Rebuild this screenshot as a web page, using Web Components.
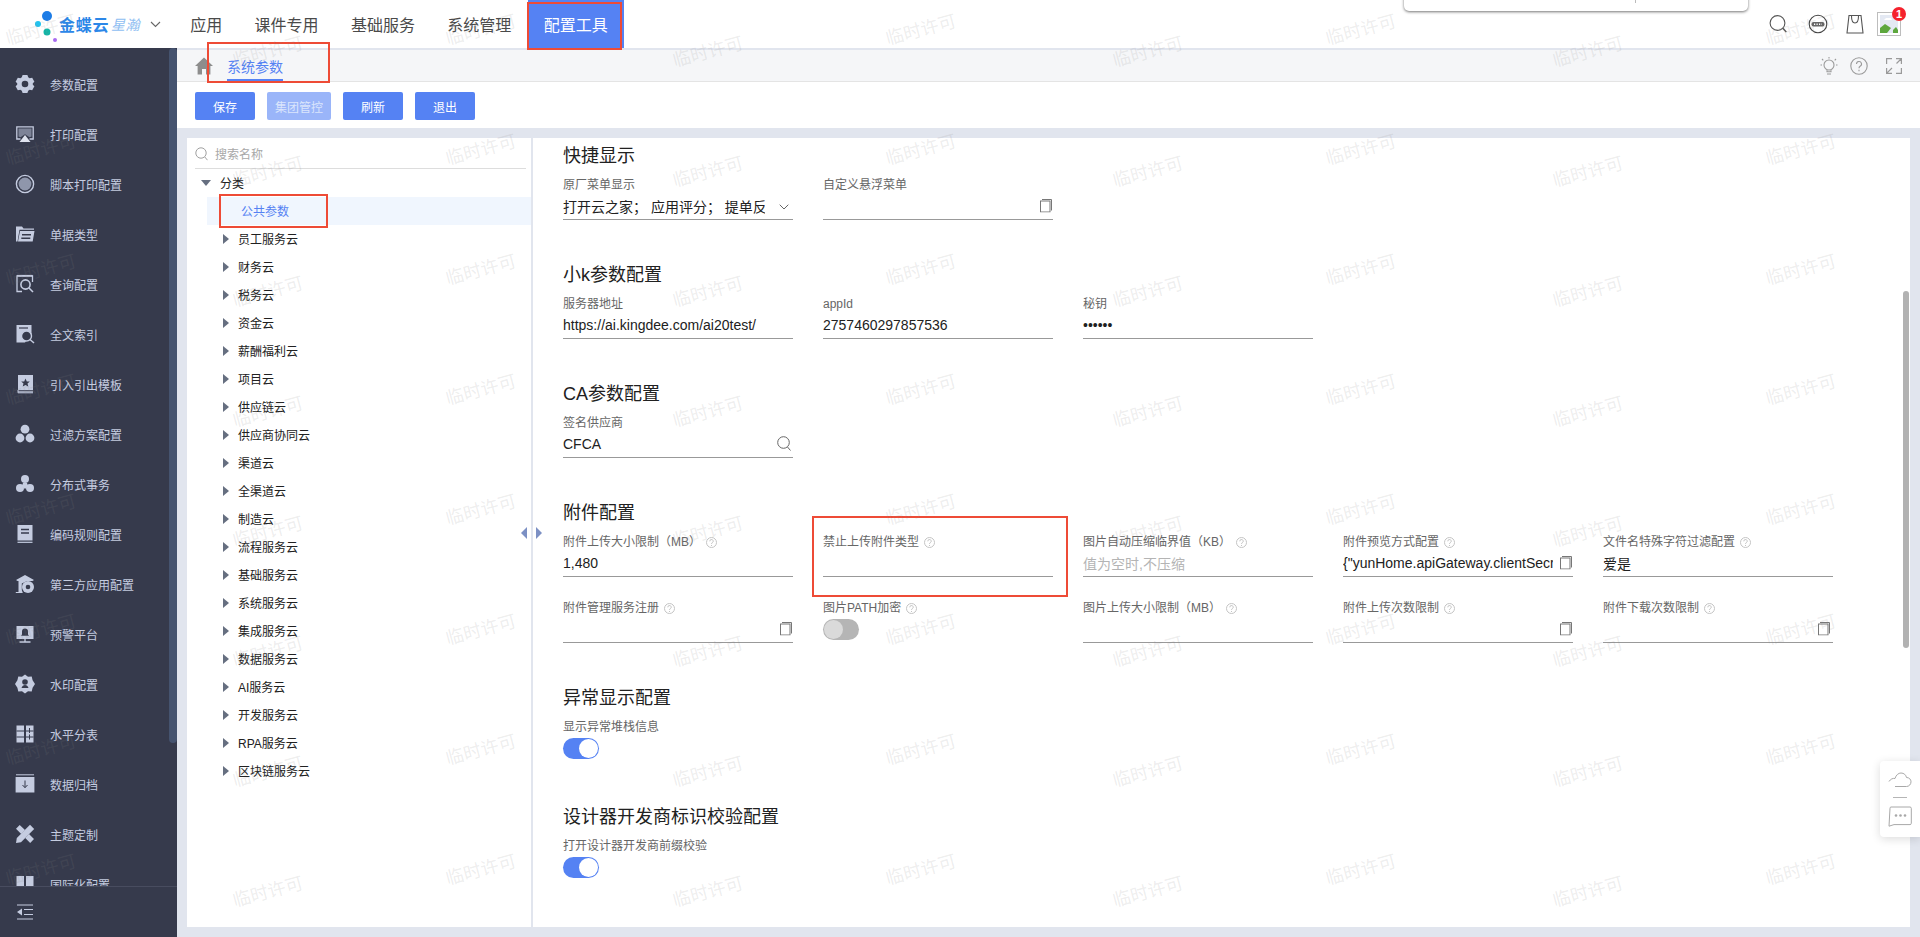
<!DOCTYPE html>
<html lang="zh-CN">
<head>
<meta charset="utf-8">
<title>系统参数</title>
<style>
html,body{margin:0;padding:0;width:1920px;height:937px;overflow:hidden;background:#fff;font-family:"Liberation Sans","Noto Sans CJK SC",sans-serif;font-size:12px;color:#212121}
svg{display:block}
</style>
</head>
<body>
<kd-app>
  <kd-header slot="header">
    <kd-nav>应用</kd-nav><kd-nav>课件专用</kd-nav><kd-nav>基础服务</kd-nav><kd-nav>系统管理</kd-nav><kd-nav active>配置工具</kd-nav>
  </kd-header>
  <kd-sidebar slot="side">
    <kd-side label="参数配置"><svg width="20" height="20" viewBox="0 0 20 20" fill="#c5cce0"><path fill-rule="evenodd" d="M7.6 1h4.8l.8 2.3 1.5.9 2.5-.5 2.2 4-1.6 1.6v1.4l1.6 1.6-2.2 4-2.5-.5-1.5.9-.8 2.3H7.6l-.8-2.3-1.5-.9-2.5.5-2.2-4 1.6-1.6V9.300L.6 7.700l2.200-4 2.500.5 1.500-.9zM10 6.700a3.300 3.300 0 1 0 0 6.600 3.300 3.300 0 0 0 0-6.600z"/></svg></kd-side>
    <kd-side label="打印配置"><svg width="20" height="20" viewBox="0 0 20 20"><path d="M5.500 15H1.800V2.800h16.400V15h-3.700" fill="none" stroke="#c5cce0" stroke-width="1.300"/><path d="M3.500 4.500h13v8l-2 .8-4.500-3-4.500 3-2-.8z" fill="#7d8397"/><path d="M10 11l5.500 7h-11z" fill="#dfe3ee"/></svg></kd-side>
    <kd-side label="脚本打印配置"><svg width="20" height="20" viewBox="0 0 20 20"><circle cx="10" cy="10" r="8.600" fill="none" stroke="#c5cce0" stroke-width="1.400"/><circle cx="10" cy="10" r="6.400" fill="#8f96ab"/></svg></kd-side>
    <kd-side label="单据类型"><svg width="20" height="20" viewBox="0 0 20 20" fill="#c5cce0"><path d="M1 2.500h6l1.500 2H19v1.200H4.500L2.500 17.500H1z"/><path fill-rule="evenodd" d="M5 7h14.500l-1.800 10.500H3zM7 10v1.400h9V10zm-.7 3.600V15h9v-1.400z"/></svg></kd-side>
    <kd-side label="查询配置"><svg width="20" height="20" viewBox="0 0 20 20" fill="none" stroke="#c5cce0" stroke-width="1.300"><path d="M7 17.500H2V1.800h15.500V8"/><path d="M2 1.800h15.500" stroke-width="1.800"/><circle cx="10.500" cy="10.500" r="4.600" stroke-width="1.600"/><path d="M14 14l4 4" stroke-width="1.600"/></svg></kd-side>
    <kd-side label="全文索引"><svg width="20" height="20" viewBox="0 0 20 20"><path d="M1.500 1h15v8.500L10 18.500H1.500z" fill="#c5cce0"/><path d="M4 4h9" stroke="#363a4c" stroke-width="1.200"/><circle cx="11.500" cy="12" r="5" fill="#363a4c" stroke="#c5cce0" stroke-width="1.400"/><path d="M15 15.500l4 3.500" stroke="#c5cce0" stroke-width="1.500"/></svg></kd-side>
    <kd-side label="引入引出模板"><svg width="20" height="20" viewBox="0 0 20 20"><path d="M3 1h15v15.200H3z" fill="#c5cce0"/><path d="M3 17.800h15M3 16v2.800h15" fill="none" stroke="#c5cce0" stroke-width="1"/><path d="M10.500 4.500l1.300 2.900 3 .2-2.300 2 .8 3-2.800-1.600-2.800 1.600.8-3-2.300-2 3-.2z" fill="#363a4c"/></svg></kd-side>
    <kd-side label="过滤方案配置"><svg width="20" height="20" viewBox="0 0 20 20" fill="#c5cce0"><circle cx="10" cy="5.200" r="4.400"/><circle cx="5" cy="14" r="4.400"/><circle cx="15" cy="14" r="4.400"/></svg></kd-side>
    <kd-side label="分布式事务"><svg width="20" height="20" viewBox="0 0 20 20" fill="#c5cce0"><circle cx="10" cy="5" r="4"/><circle cx="5" cy="14" r="4"/><circle cx="15" cy="14" r="4"/><path d="M8 9h4l1 3-3 3-3-3z"/></svg></kd-side>
    <kd-side label="编码规则配置"><svg width="20" height="20" viewBox="0 0 20 20"><path d="M2.500 1h15v15.500h-15z" fill="#c5cce0"/><path d="M2.500 18.300h15" stroke="#c5cce0" stroke-width="1.200"/><path d="M6 5.500h8M6 9h8" stroke="#363a4c" stroke-width="1.300"/></svg></kd-side>
    <kd-side label="第三方应用配置"><svg width="20" height="20" viewBox="0 0 20 20"><path d="M10 1L1 6l1.500 1h1v11H.8v1h7l-1-3V9.500L12 7h5.500L19 6z" fill="#c5cce0"/><circle cx="13" cy="13" r="6" fill="#c5cce0"/><circle cx="13" cy="13" r="2.300" fill="#363a4c"/></svg></kd-side>
    <kd-side label="预警平台"><svg width="20" height="20" viewBox="0 0 20 20"><path d="M1.500 2h17v13h-17z" fill="#c5cce0"/><path d="M10 18h-5.500M15.500 18H10v-3" stroke="#c5cce0" stroke-width="1.300" fill="none"/><path d="M10 4.500a3 3 0 0 1 3 3v3l1 1.300H6l1-1.300v-3a3 3 0 0 1 3-3z" fill="#363a4c"/></svg></kd-side>
    <kd-side label="水印配置"><svg width="20" height="20" viewBox="0 0 20 20"><path d="M10 .5l3 2.300 3.700-.2.900 3.700L20 10l-2.400 3.700-.9 3.700-3.700-.2-3 2.300-3-2.300-3.700.2-.9-3.700L0 10l2.400-3.700.9-3.700 3.700.2z" fill="#c5cce0"/><circle cx="10" cy="8" r="2.800" fill="#363a4c"/><path d="M6.500 14c.5-2 2-3 3.500-3s3 1 3.500 3z" fill="#363a4c"/></svg></kd-side>
    <kd-side label="水平分表"><svg width="20" height="20" viewBox="0 0 20 20"><path d="M1.500 1.500h7.500v17H1.500zM11 1.500h7.500v17H11z" fill="#c5cce0"/><path d="M1.500 7h7.500M1.500 13h7.500M11 7h7.500M11 13h7.500" stroke="#363a4c" stroke-width="1.100"/><path d="M14.500 4v5M14.500 10.500v5" stroke="#363a4c" stroke-width="1"/></svg></kd-side>
    <kd-side label="数据归档"><svg width="20" height="20" viewBox="0 0 20 20"><path d="M1 .8h18" stroke="#c5cce0" stroke-width="1"/><path d="M.6 3h18.800v15.500H.6z" fill="#c5cce0"/><path d="M10 6.500v7M7.500 11l2.500 2.700 2.500-2.700" fill="none" stroke="#363a4c" stroke-width="1"/></svg></kd-side>
    <kd-side label="主题定制"><svg width="20" height="20" viewBox="0 0 20 20" fill="#c5cce0"><path d="M15 .8L19.200 5 6 18.200 1 19l.8-5z"/><path d="M4.700 1L1 4.700l5.200 5.200L10 6zM14 10l-3.800 3.900 5 5L19 15z"/></svg></kd-side>
    <kd-side label="国际化配置"><svg width="20" height="20" viewBox="0 0 20 20" fill="#c5cce0"><path d="M1.500 2h7.500v16H1.500zM11 2h7.500v16H11z"/></svg></kd-side>
  </kd-sidebar>
  <kd-breadcrumb slot="crumb">系统参数</kd-breadcrumb>
  <kd-toolbar slot="toolbar">
    <kd-button>保存</kd-button><kd-button disabled>集团管控</kd-button><kd-button>刷新</kd-button><kd-button>退出</kd-button>
  </kd-toolbar>
  <kd-panel slot="content">
    <kd-tree slot="tree">
      <kd-row root>分类</kd-row>
      <kd-row leaf selected>公共参数</kd-row>
      <kd-row>员工服务云</kd-row><kd-row>财务云</kd-row><kd-row>税务云</kd-row><kd-row>资金云</kd-row><kd-row>薪酬福利云</kd-row><kd-row>项目云</kd-row><kd-row>供应链云</kd-row><kd-row>供应商协同云</kd-row><kd-row>渠道云</kd-row><kd-row>全渠道云</kd-row><kd-row>制造云</kd-row><kd-row>流程服务云</kd-row><kd-row>基础服务云</kd-row><kd-row>系统服务云</kd-row><kd-row>集成服务云</kd-row><kd-row>数据服务云</kd-row><kd-row>AI服务云</kd-row><kd-row>开发服务云</kd-row><kd-row>RPA服务云</kd-row><kd-row>区块链服务云</kd-row>
    </kd-tree>
    <kd-section title="快捷显示">
      <kd-field label="原厂菜单显示" value="打开云之家； 应用评分； 提单反馈； 帮助中心" icon="chevron"></kd-field>
      <kd-field label="自定义悬浮菜单" icon="copy"></kd-field>
    </kd-section>
    <kd-section title="小k参数配置">
      <kd-field label="服务器地址" value="https://ai.kingdee.com/ai20test/"></kd-field>
      <kd-field label="appId" value="2757460297857536"></kd-field>
      <kd-field label="秘钥" value="••••••"></kd-field>
    </kd-section>
    <kd-section title="CA参数配置">
      <kd-field label="签名供应商" value="CFCA" icon="search"></kd-field>
    </kd-section>
    <kd-section title="附件配置">
      <kd-field label="附件上传大小限制（MB）" help value="1,480"></kd-field>
      <kd-field label="禁止上传附件类型" help></kd-field>
      <kd-field label="图片自动压缩临界值（KB）" help placeholder="值为空时,不压缩"></kd-field>
      <kd-field label="附件预览方式配置" help value='{"yunHome.apiGateway.clientSecret":"kingdee"}' icon="copy"></kd-field>
      <kd-field label="文件名特殊字符过滤配置" help value="爱是"></kd-field>
      <kd-field label="附件管理服务注册" help icon="copy"></kd-field>
      <kd-field label="图片PATH加密" help toggle="off"></kd-field>
      <kd-field label="图片上传大小限制（MB）" help></kd-field>
      <kd-field label="附件上传次数限制" help icon="copy"></kd-field>
      <kd-field label="附件下载次数限制" help icon="copy" inset></kd-field>
    </kd-section>
    <kd-section title="异常显示配置">
      <kd-field label="显示异常堆栈信息" toggle="on"></kd-field>
    </kd-section>
    <kd-section title="设计器开发商标识校验配置">
      <kd-field label="打开设计器开发商前缀校验" toggle="on"></kd-field>
    </kd-section>
  </kd-panel>
  <kd-popup slot="over"></kd-popup>
  <kd-float slot="over"></kd-float>
  <kd-annot slot="over" box="527,2,95,48"></kd-annot>
  <kd-annot slot="over" box="207,42,123,41"></kd-annot>
  <kd-annot slot="over" box="219,194,109,34"></kd-annot>
  <kd-annot slot="over" box="812,516,256,81"></kd-annot>
  <kd-watermark slot="over"></kd-watermark>
</kd-app>
<script>
const mount=(el,html)=>{el.attachShadow({mode:'open'}).innerHTML=html};
const def=(n,f)=>customElements.define(n,class extends HTMLElement{constructor(){super();}connectedCallback(){if(!this.shadowRoot)f(this);}});

def('kd-app',el=>mount(el,`<style>
:host{display:flex;flex-direction:column;width:1920px;height:937px;position:relative;overflow:hidden}
.body{flex:1;display:flex;min-height:0}
.main{flex:1;display:flex;flex-direction:column;min-width:0}
.over{position:absolute;inset:0;pointer-events:none}
</style>
<slot name="header"></slot>
<div class="body"><slot name="side"></slot>
<div class="main"><slot name="crumb"></slot><slot name="toolbar"></slot><slot name="content"></slot></div></div>
<div class="over"><slot name="over"></slot></div>`));

def('kd-header',el=>mount(el,`<style>
:host{display:flex;align-items:stretch;height:48px;background:#fff;flex:none}
.logo{width:174px;flex:none;display:flex;align-items:center;position:relative}
.dots{margin-left:30px;flex:none}
.b{font:bold 16px "Liberation Sans","Noto Sans CJK SC",sans-serif;color:#2b87e8;letter-spacing:.7px;white-space:nowrap}
.x{font:italic 14px "Liberation Sans","Noto Sans CJK SC",sans-serif;color:#8fbef2;margin-left:2px;letter-spacing:.5px;white-space:nowrap}
.chev{margin-left:10px;flex:none}
nav{display:flex;align-items:stretch}
.tools{margin-left:auto;display:flex;align-items:center;padding-right:19px}
.pic{position:relative;width:24px;height:24px;box-sizing:border-box;border:1px solid #bdbdbd;margin-left:12px;background:#fff}
.badge{position:absolute;right:-6px;top:-6px;width:14px;height:14px;border-radius:50%;background:#f5222d;color:#fff;font:bold 11px/14px "Liberation Sans",sans-serif;text-align:center}
</style>
<div class="logo">
<svg class="dots" width="29" height="42" viewBox="0 0 29 42"><circle cx="17" cy="13" r="5" fill="#1c7ce6"/><circle cx="8" cy="21" r="3" fill="#22c3ee"/><circle cx="17" cy="29" r="3.500" fill="#12b7a8"/><circle cx="25" cy="37" r="2" fill="#a86bf0"/></svg>
<span class="b">金蝶云</span><span class="x">星瀚</span>
<svg class="chev" width="11" height="7" viewBox="0 0 11 7"><path d="M1 1l4.500 4.500L10 1" fill="none" stroke="#666" stroke-width="1.100"/></svg>
</div>
<nav><slot></slot></nav>
<div class="tools">
<svg width="20" height="20" viewBox="0 0 20 20" fill="none" stroke="#555" stroke-width="1.100"><circle cx="9.500" cy="9" r="7.400"/><path d="M14.800 14.300l3.500 3.700" stroke-width="1.400"/></svg>
<svg style="margin-left:20px" width="20" height="20" viewBox="0 0 20 20" fill="none" stroke="#444"><circle cx="10" cy="10" r="8.800" stroke-width="1.100"/><rect x="3.500" y="8" width="13" height="4.400" rx="2" fill="#666" stroke="none"/><path d="M6 10.200h8" stroke="#fff" stroke-dasharray="1.200 1.300" stroke-width="1.500"/></svg>
<svg style="margin-left:17px" width="20" height="20" viewBox="0 0 20 20" fill="none" stroke="#555" stroke-width="1.100"><path d="M4 1.500h12l2 17.500H2z"/><path d="M6.500 2c0 5 1.500 7 3.500 7s3.500-2 3.500-7"/></svg>
<div class="pic"><svg width="22" height="22" viewBox="0 0 22 22"><path d="M2 2h18v18H2z" fill="#e4e9f3"/><path d="M2 15l5-4 6 4-4 5H2z" fill="#5da73d"/><path d="M15 17l3-3 2 3v3h-5z" fill="#5da73d"/><path d="M8 5h5l1 2H6z" fill="#fff"/></svg><span class="badge">1</span></div>
</div>`));

def('kd-nav',el=>{const a=el.hasAttribute('active');mount(el,`<style>
:host{display:flex;align-items:center;padding:0 16.200px;font-size:16px;color:${a?'#fff':'#4a4a4a'};background:${a?'#5582f3':'transparent'};white-space:nowrap}
</style><slot></slot>`)});

def('kd-sidebar',el=>mount(el,`<style>
:host{display:flex;flex-direction:column;width:177px;flex:none;background:#363a4c;position:relative}
.list{flex:1;min-height:0;overflow:hidden;padding:11px 0 0;box-sizing:border-box;width:168px}
.thumb{position:absolute;left:169px;top:0;width:8px;height:695px;background:#45536f;border-radius:4px}
.foot{height:51px;flex:none;box-sizing:border-box;border-top:1px solid #484c5f;display:flex;align-items:center;padding-left:17px;position:relative;background:#363a4c}
</style>
<div class="list"><slot></slot></div><div class="thumb"></div>
<div class="foot"><svg width="16" height="16" viewBox="0 0 16 16"><path d="M0 1h16M7 5.500h9M7 10.500h9M0 15h16" stroke="#c5cce0" stroke-width="1.200"/><path d="M5 4.500v7L0 8z" fill="#c5cce0"/></svg></div>`));

def('kd-side',el=>mount(el,`<style>
:host{display:flex;align-items:center;height:50px;padding-left:15px;color:#c5cce0;font-size:12px;white-space:nowrap}
span{margin-left:15px}
</style><slot></slot><span>${el.getAttribute('label')}</span>`));

def('kd-breadcrumb',el=>mount(el,`<style>
:host{display:flex;flex:none;box-sizing:border-box;height:34px;background:#f5f6f8;border-top:2px solid #e1e5ee;border-bottom:1px solid #e4e4e4;padding-left:18px;align-items:stretch}
.home{align-self:center;margin-top:1px}
.tab{margin-left:14px;font-size:14px;color:#5582f3;line-height:34px;border-bottom:2px solid #5582f3;height:29px;white-space:nowrap}
.r{margin-left:auto;display:flex;align-items:center;padding-right:18px}
</style>
<svg class="home" width="18" height="18" viewBox="0 0 18 18"><path d="M9 .5L18 9h-2.600v8.500H11V12H7v5.500H2.600V9H0z" fill="#8d8d8d"/></svg>
<div class="tab"><slot></slot></div>
<div class="r">
<svg width="20" height="20" viewBox="0 0 20 20" fill="none" stroke="#9a9a9a" stroke-width="1.100"><circle cx="10" cy="9" r="5"/><path d="M8 14.300v1.500h4v-1.500M8 18h4M10 1v1.500M3 3l1.300 1.300M17 3l-1.300 1.300M1.500 9H3M17 9h1.500"/></svg>
<svg style="margin-left:11px" width="18" height="18" viewBox="0 0 18 18" fill="none" stroke="#9a9a9a" stroke-width="1.100"><circle cx="9" cy="9" r="8.200"/><path d="M6.500 7a2.500 2.500 0 1 1 3.600 2.200c-.8.500-1.100 1-1.100 2"/><path d="M9 12.800v1.400"/></svg>
<svg style="margin-left:18px" width="16" height="16" viewBox="0 0 16 16" fill="none" stroke="#9a9a9a" stroke-width="1.200"><path d="M6 .6H.6V6M10 .6h5.400V6M.6 10v5.400H6M15.400 10v5.400H10M.8 15.200L6 10M15 1l-4.500 4.500"/></svg>
</div>`));

def('kd-toolbar',el=>mount(el,`<style>:host{display:flex;flex:none;height:46px;background:#fff;padding:10px 0 0 18px;box-sizing:border-box;gap:12px}</style><slot></slot>`));

def('kd-button',el=>{const d=el.hasAttribute('disabled');mount(el,`<style>
:host{display:flex;align-items:center;justify-content:center;height:28px;min-width:60px;padding:0 8px;box-sizing:border-box;border-radius:2px;background:${d?'#9ab5f9':'#5582f3'};color:${d?'#dbe5fc':'#fff'};font-size:12px;white-space:nowrap}
</style><slot></slot>`)});

def('kd-panel',el=>mount(el,`<style>
:host{display:block;flex:1;min-height:0;background:#e1e5ee;padding:10px;box-sizing:border-box}
.box{position:relative;display:flex;height:100%;background:#fff;overflow:hidden}
.form{flex:1;min-width:0;padding:6px 0 0 30px;overflow:hidden}
.grip{position:absolute;left:334px;top:389px;display:flex;gap:9px}
.bar{position:absolute;right:1px;top:153px;width:6px;height:357px;background:#b2b2b2;border-radius:3px}
</style>
<div class="box"><slot name="tree"></slot>
<div class="grip">
<svg width="6" height="12" viewBox="0 0 6 12"><path d="M6 0v12L0 6z" fill="#7c90c4"/></svg>
<svg width="6" height="12" viewBox="0 0 6 12"><path d="M0 0v12l6-6z" fill="#7c90c4"/></svg>
</div>
<div class="form"><slot></slot></div><div class="bar"></div></div>`));

def('kd-tree',el=>mount(el,`<style>
:host{display:block;width:346px;flex:none;box-sizing:border-box;border-right:2px solid #e1e5ee}
.s{margin:0 5px 0 8px;height:31px;box-sizing:border-box;border-bottom:1px solid #ddd;display:flex;align-items:center;color:#a8a8a8;font-size:12px;gap:7px;padding-top:1px}
.rows{padding-left:20px}
</style>
<div class="s"><svg width="13" height="14" viewBox="0 0 13 14" fill="none" stroke="#a0a0a0" stroke-width="1"><circle cx="6" cy="6" r="5.200"/><path d="M9.800 10l2.700 3.200"/></svg><span>搜索名称</span></div>
<div class="rows"><slot></slot></div>`));

def('kd-row',el=>{const root=el.hasAttribute('root'),leaf=el.hasAttribute('leaf'),sel=el.hasAttribute('selected');
const arrow=root?`<svg style="margin-left:-6px" width="10" height="6" viewBox="0 0 10 6"><path d="M0 0h10L5 6z" fill="#666f80"/></svg>`:leaf?'':`<svg style="margin-left:16px" width="6" height="10" viewBox="0 0 6 10"><path d="M0 0l6 5-6 5z" fill="#666f80"/></svg>`;
mount(el,`<style>
:host{display:flex;align-items:center;height:28px;font-size:12px;color:${sel?'#5582f3':'#212121'};background:${sel?'#f0f6fe':'transparent'};white-space:nowrap}
span{margin-left:${root?'9px':leaf?'34px':'9px'};position:relative;top:-1px}
</style>${arrow}<span><slot></slot></span>`)});

def('kd-section',el=>mount(el,`<style>
:host{display:block;margin-bottom:43px}
h2{margin:0 0 6px;font-weight:normal;font-size:18px;line-height:24px;height:24px;color:#212121;white-space:nowrap}
.g{display:grid;grid-template-columns:repeat(5,230px);column-gap:30px;row-gap:20px}
</style><h2>${el.getAttribute('title')}</h2><div class="g"><slot></slot></div>`));

const ICONS={
 copy:`<svg width="14" height="14" viewBox="0 0 14 14" fill="none" stroke="#777" stroke-width="1"><rect x="1.500" y="2.500" width="9.500" height="11"/><path d="M3 1h9.500v11"/></svg>`,
 search:`<svg width="14" height="15" viewBox="0 0 14 15" fill="none" stroke="#666" stroke-width="1"><circle cx="6.500" cy="6.500" r="5.800"/><path d="M10.500 11l3 3.500"/></svg>`,
 chevron:`<svg width="10" height="6" viewBox="0 0 10 6" fill="none" stroke="#666" stroke-width="1"><path d="M.7.700L5 5 9.300.7"/></svg>`};
def('kd-field',el=>{
 const g=n=>el.getAttribute(n);const icon=g('icon'),tog=g('toggle'),val=g('value'),ph=g('placeholder'),help=el.hasAttribute('help'),inset=el.hasAttribute('inset');
 const pr=icon==='chevron'?28:icon?20:0;
 const rt=icon==='chevron'?4:icon==='search'?2:inset?2:0;
 const helpSvg=help?`<svg class="h" width="11" height="11" viewBox="0 0 11 11" fill="none" stroke="#c4c4c4"><circle cx="5.500" cy="5.500" r="5"/><path d="M3.800 4.300a1.700 1.700 0 1 1 2.500 1.400c-.5.300-.8.600-.8 1.300M5.500 8v1"/></svg>`:'';
 const body=tog?`<kd-toggle ${tog==='on'?'on':''}></kd-toggle>`:
 `<div class="in"><div class="v ${ph?'ph':''}" style="margin-right:${pr}px">${(val||ph||'').replace(/"/g,'&quot;')}</div>${icon?`<div class="ic" style="right:${rt}px;${icon==='chevron'?'margin-top:-1px':''}">${ICONS[icon]}</div>`:''}</div>`;
 mount(el,`<style>
:host{display:block;height:46px;min-width:0}
.l{height:22px;margin-bottom:-2px;line-height:20px;font-size:12px;color:#666;display:flex;align-items:center;white-space:nowrap}
.h{margin-left:5px;flex:none}
.in{position:relative;height:26px;box-sizing:border-box;border-bottom:1px solid #999;display:flex;align-items:center}
.v{flex:1;min-width:0;overflow:hidden;white-space:pre;font-size:14px;color:#212121;position:relative;top:-1px}
.ph{color:#b4b4b4}
.ic{position:absolute;top:50%;transform:translateY(-50%)}
kd-toggle{margin-top:2px}
</style><div class="l"><span>${g('label')}</span>${helpSvg}</div>${body}`)});

def('kd-toggle',el=>{const on=el.hasAttribute('on');mount(el,`<style>
:host{display:flex;width:36px;height:21px;border-radius:10.500px;background:${on?'#5582f3':'#b5b5b5'};align-items:center;justify-content:${on?'flex-end':'flex-start'};padding:0 1px;box-sizing:border-box}
i{display:block;width:19px;height:19px;border-radius:50%;background:${on?'#fff':'#dadada'}}
</style><i></i>`)});

def('kd-popup',el=>mount(el,`<style>
:host{position:absolute;left:1404px;top:-10px;width:344px;height:21px;background:#fff;border-radius:0 0 5px 5px;box-shadow:0 1px 3px rgba(0,0,0,.55)}
i{position:absolute;left:231px;top:10px;width:1px;height:3px;background:#bbb}
</style><i></i>`));

def('kd-float',el=>mount(el,`<style>
:host{position:absolute;left:1880px;top:761px;width:40px;height:76px;background:#fff;border-radius:4px 0 0 4px;box-shadow:0 2px 10px rgba(0,0,0,.14);display:flex;flex-direction:column;align-items:center;padding-top:11px;box-sizing:border-box}
i{display:block;width:14px;height:1px;background:#b5b5b5;margin:9px 0 8px}
</style>
<svg width="24" height="16" viewBox="0 0 24 16" fill="none" stroke="#a8a8a8" stroke-width="1"><path d="M1 9.500C2.500 7 5 6 7 6.500 8 3 10.500 1 13 1c3 0 5 2 5.500 4.500 2.800 0 4.500 2 4.500 4.300 0 2.500-2 4.700-4.500 4.700H7"/></svg><i></i>
<svg width="24" height="21" viewBox="0 0 24 21" fill="none" stroke="#a8a8a8" stroke-width="1"><path d="M3 1h19c.8 0 1.300.5 1.300 1.300v15c0 .8-.5 1.300-1.300 1.300H6L1 20.200 2 2.300C2 1.500 2.300 1 3 1z"/><g fill="#a8a8a8" stroke="none"><circle cx="8" cy="9.500" r="1.300"/><circle cx="12.500" cy="9.500" r="1.300"/><circle cx="17" cy="9.500" r="1.300"/></g></svg>`));

def('kd-annot',el=>{const [x,y,w,h]=el.getAttribute('box').split(',');mount(el,`<style>
:host{position:absolute;left:${x}px;top:${y}px;width:${w}px;height:${h}px;box-sizing:border-box;border:2px solid #ee4b36}
</style>`)});

def('kd-watermark',el=>{let s='';
 const put=(cx,y0)=>{for(let y=y0;y<937;y+=120)s+=`<span style="left:${cx-40}px;top:${y-12}px">临时许可</span>`};
 [41,481,921,1361,1801].forEach(c=>put(c,30));[268,708,1148,1588].forEach(c=>put(c,52));
 mount(el,`<style>
:host{position:absolute;inset:0;overflow:hidden}
span{position:absolute;width:80px;height:24px;line-height:24px;text-align:center;font-size:18px;color:rgba(130,130,130,.15);transform:rotate(-15deg);white-space:nowrap}
</style>${s}`)});
</script>
</body>
</html>
